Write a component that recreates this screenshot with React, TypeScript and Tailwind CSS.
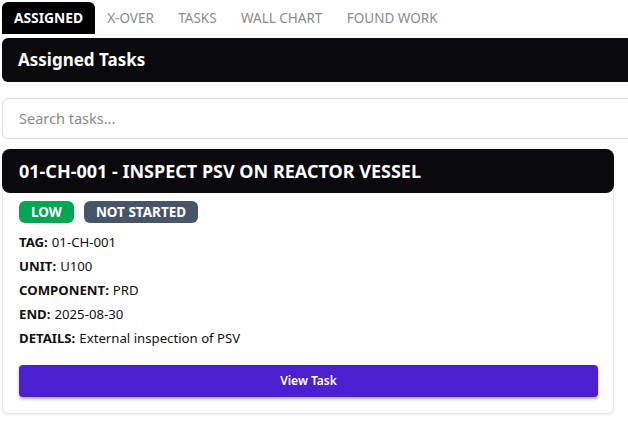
import React from "react";

export default function App() {
  const tabs = ["X-OVER", "TASKS", "WALL CHART", "FOUND WORK"];
  const rows: [string, string][] = [
    ["TAG:", "01-CH-001"],
    ["UNIT:", "U100"],
    ["COMPONENT:", "PRD"],
    ["END:", "2025-08-30"],
    ["DETAILS:", "External inspection of PSV"],
  ];
  return (
    <div
      className="w-[628px] h-[423px] overflow-hidden bg-white"
      style={{ fontFamily: '"Noto Sans", "Open Sans", sans-serif' }}
    >
      <div className="flex items-end pl-[2px] pt-[2px] h-[34px]">
        <div className="h-[32px] w-[93px] bg-black text-white rounded-t-[6px] flex items-center justify-center text-[13.8px] font-bold">
          ASSIGNED
        </div>
        {tabs.map((t) => (
          <div key={t} className="h-[32px] px-[12.2px] flex items-center text-[13.5px] text-[#8a8a8a]">
            {t}
          </div>
        ))}
      </div>
      <div className="ml-[2px] mt-[4px] w-[700px] h-[44px] bg-[#0a0a0c] rounded-[6px] flex items-center pl-[16px] text-white text-[17px] font-bold">
        Assigned Tasks
      </div>
      <div className="ml-[2px] mt-[16px] w-[700px] h-[41px] border border-[#dcdcdc] rounded-[6px] flex items-center pl-[16px] text-[14.5px] text-[#8a8a8a]">
        Search tasks...
      </div>
      <div className="ml-[2px] mt-[10px] w-[612px] h-[265px] rounded-[6px] border border-[#e6e6e6] shadow-[0_1px_3px_rgba(0,0,0,0.08)] flex flex-col">
        <div className="-m-px h-[44px] bg-[#0a0a0c] rounded-[8px] flex items-center pl-[17px] text-white text-[18px] font-bold">
          01-CH-001 - INSPECT PSV ON REACTOR VESSEL
        </div>
        <div className="px-[16px] pt-[9px] flex flex-col">
          <div className="flex gap-[10px]">
            <span className="h-[22px] px-[12px] rounded-[6px] bg-[#00a651] text-white text-[13.5px] font-bold flex items-center">
              LOW
            </span>
            <span className="h-[22px] px-[12px] rounded-[6px] bg-[#475569] text-white text-[13.5px] font-bold flex items-center">
              NOT STARTED
            </span>
          </div>
          <div className="mt-[8px] flex flex-col text-[13.2px] text-[#111]">
            {rows.map(([k, v]) => (
              <div key={k} className="h-[24px] flex items-center">
                <span className="font-bold mr-[4px]">{k}</span>
                <span>{v}</span>
              </div>
            ))}
          </div>
          <div className="mt-[14px] h-[32px] w-[579px] rounded-[4px] bg-[#4c1fd0] shadow-[0_2px_3px_rgba(120,70,230,0.5)] flex items-center justify-center text-white text-[12px] font-semibold">
            View Task
          </div>
        </div>
      </div>
    </div>
  );
}
